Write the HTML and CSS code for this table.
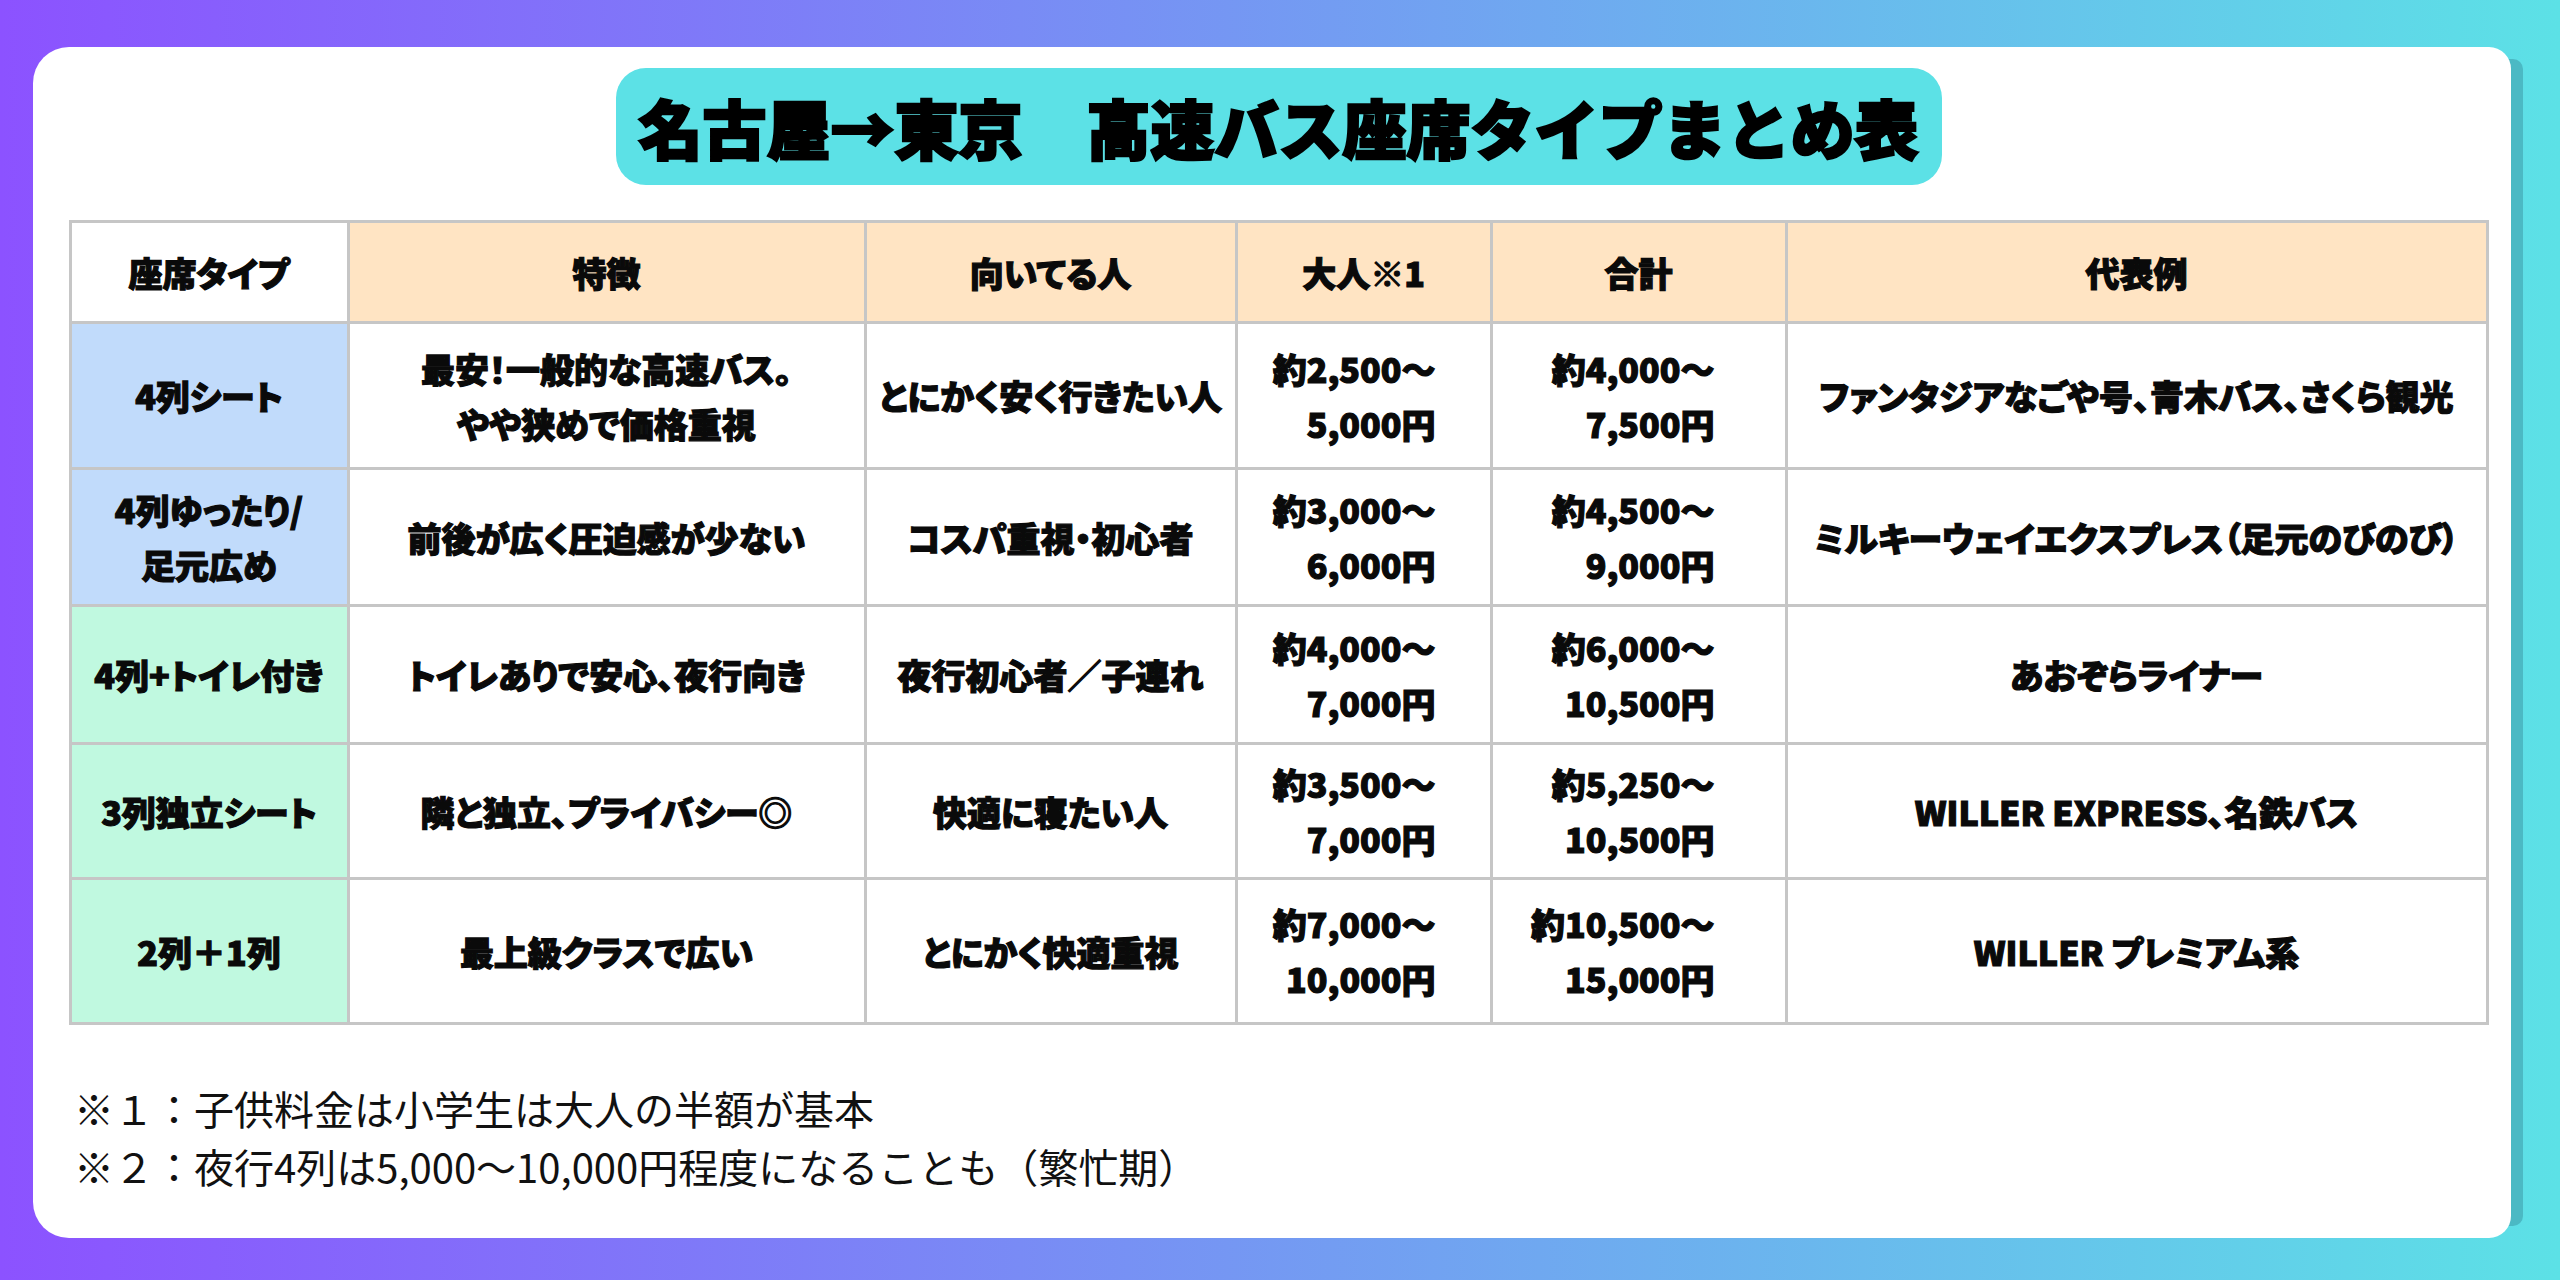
FILE: index.html
```html
<!DOCTYPE html>
<html lang="ja">
<head>
<meta charset="utf-8">
<title>名古屋→東京 高速バス座席タイプまとめ表</title>
<link rel="stylesheet" href="styles.css">
</head>
<body>
<main class="card">
  <h1 class="title">名古屋→東京　高速バス座席タイプまとめ表</h1>
  <table class="seats">
    <colgroup>
      <col class="c-type">
      <col class="c-feature">
      <col class="c-who">
      <col class="c-adult">
      <col class="c-total">
      <col class="c-example">
    </colgroup>
    <thead>
      <tr class="r-head">
        <th class="corner">座席タイプ</th>
        <th>特徴</th>
        <th>向いてる人</th>
        <th>大人※1</th>
        <th>合計</th>
        <th>代表例</th>
      </tr>
    </thead>
    <tbody>
      <tr class="r1">
        <th class="type blue">4列シート</th>
        <td>最安！一般的な高速バス。<br>やや狭めで価格重視</td>
        <td>とにかく安く行きたい人</td>
        <td class="price adult">約2,500〜<br>5,000円</td>
        <td class="price total">約4,000〜<br>7,500円</td>
        <td>ファンタジアなごや号、青木バス、さくら観光</td>
      </tr>
      <tr class="r2">
        <th class="type blue">4列ゆったり/<br>足元広め</th>
        <td>前後が広く圧迫感が少ない</td>
        <td>コスパ重視・初心者</td>
        <td class="price adult">約3,000〜<br>6,000円</td>
        <td class="price total">約4,500〜<br>9,000円</td>
        <td>ミルキーウェイエクスプレス（足元のびのび）</td>
      </tr>
      <tr class="r3">
        <th class="type mint">4列+トイレ付き</th>
        <td>トイレありで安心、夜行向き</td>
        <td>夜行初心者／子連れ</td>
        <td class="price adult">約4,000〜<br>7,000円</td>
        <td class="price total">約6,000〜<br>10,500円</td>
        <td>あおぞらライナー</td>
      </tr>
      <tr class="r4">
        <th class="type mint">3列独立シート</th>
        <td>隣と独立、プライバシー◎</td>
        <td>快適に寝たい人</td>
        <td class="price adult">約3,500〜<br>7,000円</td>
        <td class="price total">約5,250〜<br>10,500円</td>
        <td>WILLER EXPRESS、名鉄バス</td>
      </tr>
      <tr class="r5">
        <th class="type mint">2列＋1列</th>
        <td>最上級クラスで広い</td>
        <td>とにかく快適重視</td>
        <td class="price adult">約7,000〜<br>10,000円</td>
        <td class="price total">約10,500〜<br>15,000円</td>
        <td>WILLER プレミアム系</td>
      </tr>
    </tbody>
  </table>
  <div class="notes">
    <p>※１：子供料金は小学生は大人の半額が基本</p>
    <p>※２：夜行4列は5,000〜10,000円程度になることも（繁忙期）</p>
  </div>
</main>
</body>
</html>
```

FILE: styles.css
```css
* {
  box-sizing: border-box;
}

html,
body {
  margin: 0;
  padding: 0;
}

body {
  width: 2560px;
  height: 1280px;
  overflow: hidden;
  padding: 47px 0 0 33px;
  background: linear-gradient(90deg, #8c52ff 0%, #5ce1e6 100%);
  font-family: "Noto Sans CJK JP", "Noto Sans", sans-serif;
  color: #000;
}

.card {
  width: 2478px;
  height: 1191px;
  background: #fff;
  border-radius: 36px 22px 22px 36px;
  box-shadow: 24px 0 0 -12px #4bb9c4;
  padding: 21px 24px 0 37px;
  display: flex;
  flex-direction: column;
  align-items: center;
}

.title {
  margin: 0;
  height: 117px;
  padding: 0 23px;
  background: #5ce1e6;
  border-radius: 30px;
  font-size: 64px;
  font-weight: 900;
  line-height: 117px;
  white-space: nowrap;
  -webkit-text-stroke: 2.5px #000;
}

.seats {
  margin-top: 35px;
  width: 2417px;
  table-layout: fixed;
  border-collapse: collapse;
}

.c-type { width: 278px; }
.c-feature { width: 517px; }
.c-who { width: 371px; }
.c-adult { width: 255px; }
.c-total { width: 295px; }
.c-example { width: 701px; }

.seats th,
.seats td {
  border: 3px solid #c6c6c6;
  padding: 0;
  text-align: center;
  vertical-align: middle;
  font-size: 34px;
  font-weight: 900;
  line-height: 55px;
  font-feature-settings: "palt";
  color: #0a0a0a;
  -webkit-text-stroke: 1.2px #0a0a0a;
}

.seats thead th {
  background: #ffe4c3;
}

.seats thead th.corner {
  background: #fff;
}

.r-head { height: 101px; }
.r1 { height: 146px; }
.r2 { height: 137px; }
.r3 { height: 138px; }
.r4 { height: 135px; }
.r5 { height: 145px; }

.type.blue {
  background: #c1dbfb;
}

.type.mint {
  background: #c0f9e0;
}

.seats td.price.adult {
  text-align: right;
  padding-right: 54px;
}

.seats td.price.total {
  text-align: right;
  padding-right: 70px;
}

.notes {
  align-self: flex-start;
  margin-top: 54px;
  padding-left: 4px;
  font-size: 40px;
  font-weight: 400;
  line-height: 58px;
  color: #111;
}

.notes p {
  margin: 0;
}
```
